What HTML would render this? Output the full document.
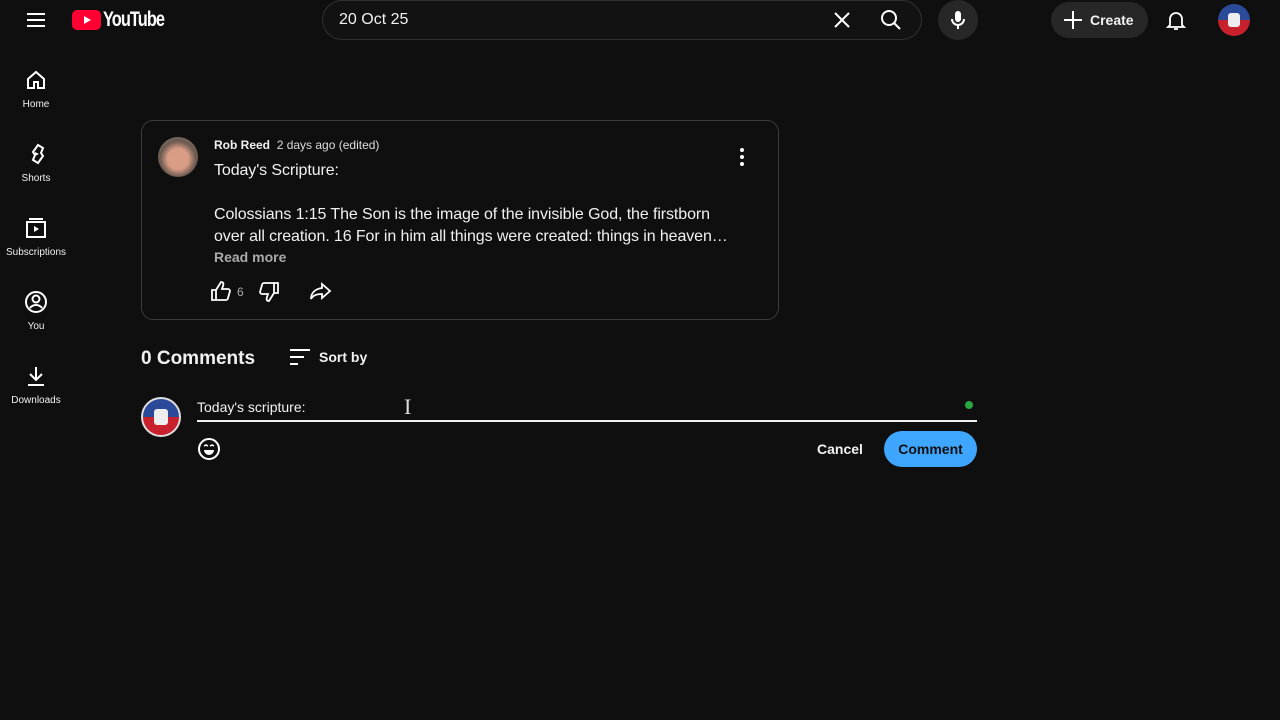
<!DOCTYPE html>
<html><head><meta charset="utf-8"><style>
*{margin:0;padding:0;box-sizing:border-box}
body{width:1280px;height:720px;background:#0f0f0f;color:#f1f1f1;font-family:"Liberation Sans",sans-serif;position:relative;overflow:hidden}
.a{position:absolute;white-space:nowrap}
svg{display:block}
.nav{width:72px;text-align:center;font-size:10px;color:#f1f1f1}
</style></head><body>
<!-- header -->
<svg class="a" style="left:24px;top:10px" width="24" height="20" viewBox="0 0 24 20"><path d="M3 4h18M3 10h18M3 16h18" stroke="#fff" stroke-width="2"/></svg>
<div class="a" style="left:72px;top:10px;width:29px;height:20px;background:#ff0033;border-radius:5px"></div>
<svg class="a" style="left:72px;top:10px" width="29" height="20"><path d="M12 6l7 4-7 4z" fill="#fff"/></svg>
<div class="a" style="left:103px;top:8px;font-size:21px;letter-spacing:-1.2px;font-weight:bold;color:#fff;transform:scaleX(.78);transform-origin:left">YouTube</div>
<div class="a" style="left:322px;top:0;width:600px;height:40px;border:1px solid #303030;border-radius:20px;background:#121212"></div>
<div class="a" style="left:339px;top:11px;font-size:16px">20 Oct 25</div>
<svg class="a" style="left:832px;top:10px" width="20" height="20"><path d="M3 3l14 14M17 3L3 17" stroke="#fff" stroke-width="2"/></svg>
<svg class="a" style="left:879px;top:8px" width="24" height="24"><circle cx="10" cy="10" r="7" stroke="#fff" stroke-width="2" fill="none"/><path d="M15 15l6 6" stroke="#fff" stroke-width="2"/></svg>
<div class="a" style="left:938px;top:0;width:40px;height:40px;border-radius:50%;background:#272727"></div>
<svg class="a" style="left:946px;top:8px" width="24" height="24"><rect x="9" y="3" width="6" height="11" rx="3" fill="#fff"/><path d="M6 11a6 6 0 0012 0M12 17v4" stroke="#fff" stroke-width="2" fill="none"/></svg>
<div class="a" style="left:1051px;top:2px;width:97px;height:36px;border-radius:18px;background:#272727"></div>
<svg class="a" style="left:1062px;top:9px" width="22" height="22"><path d="M11 2v18M2 11h18" stroke="#fff" stroke-width="2"/></svg>
<div class="a" style="left:1090px;top:12px;font-size:14px;font-weight:bold">Create</div>
<svg class="a" style="left:1164px;top:8px" width="24" height="24"><path d="M6 17V11a6 6 0 0112 0v6l2 2H4z M10 21h4" stroke="#fff" stroke-width="1.8" fill="none"/></svg>
<div class="a" style="left:1218px;top:4px;width:32px;height:32px;border-radius:50%;background:linear-gradient(#2c4a9a 0 50%,#c8202c 50%)"><div style="margin:9px auto;width:12px;height:14px;background:#eee;border-radius:3px"></div></div>
<!-- sidebar -->
<svg class="a" style="left:24px;top:68px" width="24" height="24"><path d="M4 11l8-7 8 7v9h-6v-6h-4v6H4z" stroke="#fff" stroke-width="2" fill="none"/></svg>
<div class="a nav" style="left:0;top:99px">Home</div>
<svg class="a" style="left:24px;top:142px" width="24" height="24"><path d="M14 3l5 3-2 5 2 3-5 7-5-3 2-5-2-3z" stroke="#fff" stroke-width="2" fill="none"/><path d="M11 10l4 2-4 2z" fill="#fff"/></svg>
<div class="a nav" style="left:0;top:173px">Shorts</div>
<svg class="a" style="left:24px;top:216px" width="24" height="24"><rect x="3" y="6" width="18" height="15" stroke="#fff" stroke-width="2" fill="none"/><path d="M5 3h14" stroke="#fff" stroke-width="2"/><path d="M10 10l5 3-5 3z" fill="#fff"/></svg>
<div class="a nav" style="left:0;top:247px">Subscriptions</div>
<svg class="a" style="left:24px;top:290px" width="24" height="24"><circle cx="12" cy="12" r="10" stroke="#fff" stroke-width="2" fill="none"/><circle cx="12" cy="9" r="3.5" stroke="#fff" stroke-width="2" fill="none"/><path d="M6 18c3-4 9-4 12 0" stroke="#fff" stroke-width="2" fill="none"/></svg>
<div class="a nav" style="left:0;top:321px">You</div>
<svg class="a" style="left:24px;top:364px" width="24" height="24"><path d="M12 3v13M6 10l6 6 6-6M4 21h16" stroke="#fff" stroke-width="2" fill="none"/></svg>
<div class="a nav" style="left:0;top:395px">Downloads</div>
<!-- comment card -->
<div class="a" style="left:141px;top:120px;width:638px;height:200px;border:1px solid #3a3a3a;border-radius:12px"></div>
<div class="a" style="left:158px;top:137px;width:40px;height:40px;border-radius:50%;background:radial-gradient(circle at 50% 55%,#d99c85 0 35%,#6b5a50 60%,#8a7a70)"></div>
<div class="a" style="left:214px;top:138px;font-size:12px"><b>Rob Reed</b>&nbsp; <span style="color:#ddd">2 days ago (edited)</span></div>
<div class="a" style="left:214px;top:160px;font-size:16px;line-height:22px;letter-spacing:-0.1px">Today's Scripture:<br><br>Colossians 1:15 The Son is the image of the invisible God, the firstborn<br>over all creation. 16 For in him all things were created: things in heaven…</div>
<div class="a" style="left:214px;top:249px;font-size:14px;color:#aaa;font-weight:bold">Read more</div>
<svg class="a" style="left:739px;top:147px" width="6" height="20"><circle cx="3" cy="3" r="2" fill="#fff"/><circle cx="3" cy="10" r="2" fill="#fff"/><circle cx="3" cy="17" r="2" fill="#fff"/></svg>
<svg class="a" style="left:209px;top:279px" width="24" height="24"><path d="M3 11h4v10H3z M7 11l5-8c2 0 3 1 2 4l-1 3h6c1 0 2 1 2 2l-2 7c0 1-1 2-2 2H7" stroke="#fff" stroke-width="1.8" fill="none"/></svg>
<div class="a" style="left:237px;top:285px;font-size:12px;color:#aaa">6</div>
<svg class="a" style="left:257px;top:280px" width="24" height="24"><path d="M3 3h4v10H3z M7 13l5 8c2 0 3-1 2-4l-1-3h6c1 0 2-1 2-2l-2-7c0-1-1-2-2-2H7" stroke="#fff" stroke-width="1.8" fill="none" transform="translate(24 0) scale(-1 1)"/></svg>
<svg class="a" style="left:308px;top:279px" width="26" height="24"><path d="M14 5l8 7-8 7v-4c-5 0-9 1-11 5 0-6 4-10 11-11z" stroke="#fff" stroke-width="1.8" fill="none"/></svg>
<!-- comments -->
<div class="a" style="left:141px;top:348px;font-size:19px;font-weight:bold">0 Comments</div>
<svg class="a" style="left:288px;top:346px" width="24" height="22"><path d="M2 4h20M2 11h14M2 18h8" stroke="#fff" stroke-width="2"/></svg>
<div class="a" style="left:319px;top:349px;font-size:14px;font-weight:bold">Sort by</div>
<div class="a" style="left:141px;top:397px;width:40px;height:40px;border-radius:50%;background:linear-gradient(#2c4a9a 0 50%,#c8202c 50%);border:2px solid #ddd"><div style="margin:10px auto;width:14px;height:16px;background:#eee;border-radius:3px"></div></div>
<div class="a" style="left:197px;top:399px;font-size:14px">Today's scripture:</div>
<div class="a" style="left:197px;top:420px;width:780px;height:2px;background:#f1f1f1"></div>
<div class="a" style="left:404px;top:394px;font-size:22px;color:#ddd;font-family:'Liberation Serif',serif">I</div>
<div class="a" style="left:965px;top:401px;width:8px;height:8px;border-radius:50%;background:#2ba640"></div>
<svg class="a" style="left:197px;top:437px" width="24" height="24"><circle cx="12" cy="12" r="10" stroke="#fff" stroke-width="2" fill="none"/><path d="M7 13h10a5 5 0 01-10 0z" fill="#fff"/><path d="M7 9l2-1 2 1M13 9l2-1 2 1" stroke="#fff" stroke-width="1.5" fill="none"/></svg>
<div class="a" style="left:817px;top:441px;font-size:14px;font-weight:bold">Cancel</div>
<div class="a" style="left:884px;top:431px;width:93px;height:36px;border-radius:18px;background:#3ea6ff;color:#0f0f0f;font-size:14px;font-weight:bold;text-align:center;line-height:36px">Comment</div>
</body></html>
